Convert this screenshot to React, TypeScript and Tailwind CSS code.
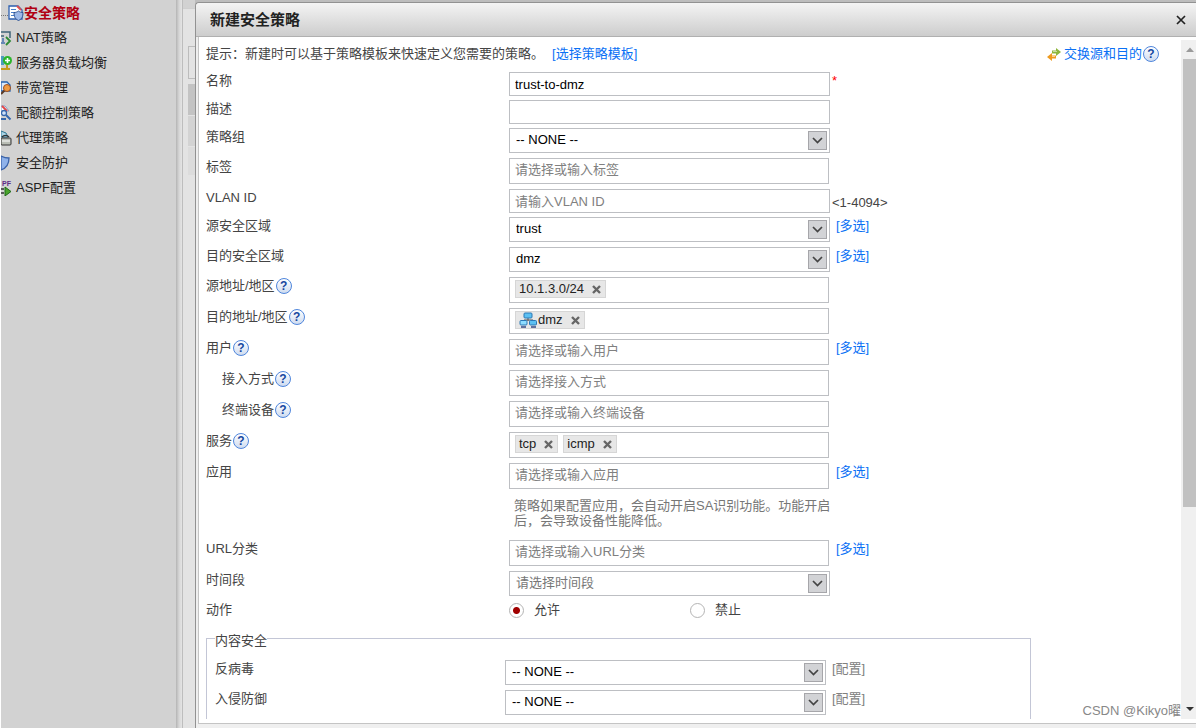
import { useId, useState, type ReactNode } from "react";

const menu = [
  { name: "安全策略", icon: "policy" },
  { name: "NAT策略", icon: "nat" },
  { name: "服务器负载均衡", icon: "balance" },
  { name: "带宽管理", icon: "bandwidth" },
  { name: "配额控制策略", icon: "quota" },
  { name: "代理策略", icon: "proxy" },
  { name: "安全防护", icon: "shield" },
  { name: "ASPF配置", icon: "aspf" },
];

export default function App() {
  return (
    <div className="flex h-screen overflow-hidden bg-[#e6e6e6] font-['Liberation_Sans','Noto_Sans_CJK_SC',sans-serif] text-[13px] leading-[18px] text-[#444]">
      <Sidebar />
      <PageBehind />
      <PolicyDialog />
      <p className="pointer-events-none absolute right-[15px] bottom-2 text-[#888]">
        CSDN @Kikyo曜
      </p>
    </div>
  );
}

function Sidebar() {
  return (
    <nav className="w-[176px] shrink-0 border-l border-white bg-[#d2d2d2]">
      <ul>
        {menu.map((item, i) => (
          <li key={item.name} className="h-[25px]">
            <a
              href="#"
              className={
                i === 0
                  ? "flex h-full items-center text-sm font-bold text-[#b00012]"
                  : "flex h-full items-center gap-1 text-[#222]"
              }
            >
              <MenuIcon name={item.icon} />
              {item.name}
            </a>
          </li>
        ))}
      </ul>
    </nav>
  );
}

/** 对话框后面露出的页面边缘 */
function PageBehind() {
  return (
    <div className="flex w-[19px] shrink-0">
      <div className="w-[7px] shrink-0 border-r border-[#bdbdbd] bg-linear-to-r from-[#b4b4b4] via-[#d6d6d6] to-[#e4e4e4]" />
      <div className="flex flex-1 flex-col bg-[#e3e3e3]">
        <div className="h-[9px] border-b border-[#cfcfcf] bg-[#d2d2d2]" />
        <div className="mt-[37px] ml-[5px] h-[33px] border border-r-0 border-[#bcbcbc]" />
        <div className="mt-[5px] ml-[5px] h-[31px] bg-[#c3c3c3]" />
        <div className="mt-px ml-[5px] h-[30px] bg-[#d3d3d3]" />
        <div className="mt-px ml-[5px] h-[28px] bg-[#dcdcdc]" />
      </div>
    </div>
  );
}

function PolicyDialog() {
  return (
    <div className="flex min-w-0 flex-1 flex-col bg-[#bdbdbd] pt-[2px]">
      <section
        role="dialog"
        aria-labelledby="dialog-title"
        className="flex min-h-0 flex-1 flex-col rounded-tl border-t border-l border-[#929292] bg-[#efefef]"
      >
        <header className="flex h-[34px] shrink-0 items-center justify-between rounded-tl border-b border-[#b0b0b0] bg-linear-to-b from-[#f4f4f4] to-[#cdcdcd] pr-[10px] pl-[14px]">
          <h1 id="dialog-title" className="text-[15px] font-bold text-[#222]">
            新建安全策略
          </h1>
          <button type="button" aria-label="关闭">
            <svg viewBox="0 0 10 10" className="size-[10px]" stroke="#222" strokeWidth="1.7">
              <path d="M1 1l8 8M9 1l-8 8" />
            </svg>
          </button>
        </header>
        <div className="mb-1 ml-[2px] flex min-h-0 flex-1 border-b border-l border-[#c4c4c4] bg-white pb-1">
          <PolicyForm />
          <ScrollBar />
        </div>
      </section>
    </div>
  );
}

function PolicyForm() {
  const [action, setAction] = useState("allow");

  return (
    <form className="min-w-0 flex-1 overflow-hidden pt-2 pl-[7px]">
      <div className="flex h-[27px] items-start justify-between pr-[22px]">
        <div className="flex gap-2">
          <p>提示：新建时可以基于策略模板来快速定义您需要的策略。</p>
          <Link>[选择策略模板]</Link>
        </div>
        <div className="flex items-center">
          <SwapIcon />
          <Link>交换源和目的</Link>
          <Help />
        </div>
      </div>

      <Row label="名称" after={<span className="-ml-1 text-[#f00]">*</span>}>
        {(id) => <TextBox id={id} value="trust-to-dmz" />}
      </Row>
      <Row label="描述">{(id) => <TextBox id={id} />}</Row>
      <Row label="策略组">{(id) => <SelectBox id={id} options={["-- NONE --"]} />}</Row>
      <Row label="标签">{(id) => <TagBox id={id} placeholder="请选择或输入标签" />}</Row>
      <Row label="VLAN ID" after={<span className="-ml-1 self-center">&lt;1-4094&gt;</span>}>
        {(id) => <TextBox id={id} placeholder="请输入VLAN ID" />}
      </Row>
      <Row label="源安全区域" after={<Link>[多选]</Link>}>
        {(id) => <SelectBox id={id} options={["trust", "dmz"]} />}
      </Row>
      <Row label="目的安全区域" after={<Link>[多选]</Link>}>
        {(id) => <SelectBox id={id} options={["dmz", "trust"]} />}
      </Row>
      <Row label="源地址/地区" help>
        {(id) => <TagBox id={id} tags={["10.1.3.0/24"]} />}
      </Row>
      <Row label="目的地址/地区" help>
        {(id) => <TagBox id={id} tags={["dmz"]} icon={<NetworkIcon />} />}
      </Row>
      <Row label="用户" help after={<Link>[多选]</Link>}>
        {(id) => <TagBox id={id} placeholder="请选择或输入用户" />}
      </Row>
      <Row label="接入方式" help indent>
        {(id) => <TagBox id={id} placeholder="请选择接入方式" />}
      </Row>
      <Row label="终端设备" help indent>
        {(id) => <TagBox id={id} placeholder="请选择或输入终端设备" />}
      </Row>
      <Row label="服务" help>
        {(id) => <TagBox id={id} tags={["tcp", "icmp"]} />}
      </Row>
      <Row label="应用" after={<Link>[多选]</Link>}>
        {(id) => <TagBox id={id} placeholder="请选择或输入应用" />}
      </Row>
      <p className="mt-1 ml-[303px] w-[330px] pb-3 pl-[5px] leading-[15px] text-[#777]">
        策略如果配置应用，会自动开启SA识别功能。功能开启后，会导致设备性能降低。
      </p>
      <Row label="URL分类" after={<Link>[多选]</Link>}>
        {(id) => <TagBox id={id} placeholder="请选择或输入URL分类" />}
      </Row>
      <Row label="时间段">
        {(id) => <SelectBox id={id} options={["请选择时间段"]} muted />}
      </Row>

      <div role="radiogroup" aria-labelledby="action-label" className="flex h-[25px] items-start">
        <span id="action-label" className="w-[303px]">
          动作
        </span>
        <Radio label="允许" checked={action === "allow"} onChange={() => setAction("allow")} />
        <Radio label="禁止" checked={action === "deny"} onChange={() => setAction("deny")} />
      </div>

      <fieldset className="w-[825px] border border-[#c3c6d6] px-2 pt-[10px]">
        <legend className="pt-[6px]">内容安全</legend>
        <Row label="反病毒" nested after={<Link disabled>[配置]</Link>}>
          {(id) => <SelectBox id={id} options={["-- NONE --"]} />}
        </Row>
        <Row label="入侵防御" nested after={<Link disabled>[配置]</Link>}>
          {(id) => <SelectBox id={id} options={["-- NONE --"]} />}
        </Row>
        <div className="h-10" />
      </fieldset>
    </form>
  );
}

type RowProps = {
  label: string;
  help?: boolean;
  indent?: boolean;
  nested?: boolean;
  after?: ReactNode;
  children: (id: string) => ReactNode;
};

function Row({ label, help, indent, nested, after, children }: RowProps) {
  const id = useId();
  return (
    <div className="flex items-start">
      <div
        className={`flex shrink-0 items-center ${nested ? "w-[290px]" : "w-[303px]"} ${indent ? "pl-4" : ""}`}
      >
        <label htmlFor={id}>{label}</label>
        {help && <Help />}
      </div>
      <div className="flex items-start gap-[6px]">
        {children(id)}
        {after}
      </div>
    </div>
  );
}

function TextBox({ id, value, placeholder }: { id: string; value?: string; placeholder?: string }) {
  return (
    <input
      id={id}
      type="text"
      defaultValue={value}
      placeholder={placeholder}
      className="mb-1 h-6 w-[321px] border border-[#bdbfc3] bg-white px-[5px] text-black placeholder:text-[#808080]"
    />
  );
}

function SelectBox({ id, options, muted }: { id: string; options: string[]; muted?: boolean }) {
  return (
    <div className="relative mb-[5px] h-[25px] w-[321px]">
      <select
        id={id}
        className={`size-full appearance-none border border-[#bdbfc3] bg-white pb-[2px] pl-[6px] ${muted ? "text-[#777]" : "text-black"}`}
      >
        {options.map((o) => (
          <option key={o}>{o}</option>
        ))}
      </select>
      <span className="pointer-events-none absolute top-[3px] right-[3px] grid size-[19px] place-items-center border border-[#a6a6aa] bg-[#d2d3d6]">
        <svg viewBox="0 0 11 7" className="h-[7px] w-[11px]" fill="none" stroke="#444" strokeWidth="1.7">
          <path d="M1 1l4.5 4.5L10 1" />
        </svg>
      </span>
    </div>
  );
}

type TagBoxProps = { id: string; tags?: string[]; icon?: ReactNode; placeholder?: string };

function TagBox({ id, tags = [], icon, placeholder }: TagBoxProps) {
  const [items, setItems] = useState(tags);
  return (
    <div className="mr-px mb-[5px] flex h-[26px] w-[320px] items-start gap-[5px] border border-[#bdbfc3] bg-white px-[5px] pt-[2px]">
      {items.map((tag) => (
        <span
          key={tag}
          className="flex h-[18px] items-center border border-[#d6d6d6] bg-[#e7e7e7] px-[3px] leading-4 text-[#222]"
        >
          {icon}
          {tag}
          <button
            type="button"
            aria-label={`删除 ${tag}`}
            onClick={() => setItems(items.filter((t) => t !== tag))}
            className="ml-[7px] p-px"
          >
            <svg viewBox="0 0 9 9" className="size-[9px]" stroke="#666" strokeWidth="2.4">
              <path d="M1 1l7 7M8 1l-7 7" />
            </svg>
          </button>
        </span>
      ))}
      <input
        id={id}
        type="text"
        placeholder={placeholder}
        className="h-[18px] min-w-0 flex-1 outline-none placeholder:text-[#808080]"
      />
    </div>
  );
}

function Radio({ label, checked, onChange }: { label: string; checked: boolean; onChange: () => void }) {
  return (
    <label className="flex w-[181px] items-center gap-[10px]">
      <input
        type="radio"
        name="action"
        checked={checked}
        onChange={onChange}
        className="size-[15px] appearance-none rounded-full border border-[#b4b4b4] bg-white checked:bg-[radial-gradient(circle,#a00000_3px,#fff_4px)]"
      />
      {label}
    </label>
  );
}

function Link({ children, disabled }: { children: ReactNode; disabled?: boolean }) {
  return (
    <a href="#" className={disabled ? "text-[#808080]" : "text-[#0a70f5]"}>
      {children}
    </a>
  );
}

function Help() {
  return (
    <button
      type="button"
      aria-label="帮助"
      className="ml-px grid size-4 place-items-center rounded-full border border-[#4f86dc] bg-linear-to-b from-white to-[#cfdcf0] text-xs leading-none font-bold text-[#1747a0]"
    >
      ?
    </button>
  );
}

function ScrollBar() {
  return (
    <div aria-hidden="true" className="mt-[3px] flex w-[15px] shrink-0 flex-col bg-[#f0f0f0] pl-[2px]">
      <svg viewBox="0 0 13 19" className="h-[19px] w-[13px] shrink-0" fill="#9a9a9a">
        <path d="M3 12l4-4.500 4 4.500z" />
      </svg>
      <div className="h-[66%] bg-[#c1c1c1]" />
      <svg viewBox="0 0 13 19" className="mt-auto h-[19px] w-[13px] shrink-0" fill="#333">
        <path d="M3 7h8l-4 4z" />
      </svg>
    </div>
  );
}

function SwapIcon() {
  return (
    <svg viewBox="0 0 16 14" className="mr-[2px] h-[14px] w-4">
      <path d="M6 3.500h4V1l5 4-5 4V6.500H6z" fill="#8db63c" />
      <path d="M10 8.500H6V6L1 10l5 4v-2.500h4z" fill="#ee9a1e" />
      <path d="M7 4.500h4M6 9.500h3" stroke="#fff" strokeOpacity=".5" />
    </svg>
  );
}

function NetworkIcon() {
  return (
    <svg viewBox="0 0 18 16" className="mr-px h-4 w-[18px]">
      <path d="M9 6v3M5 10V8h9v2" stroke="#555" fill="none" />
      <rect x="5" y="1" width="8" height="5" rx="1" fill="#5cc0f2" stroke="#2b78b5" />
      <rect x="1" y="8.500" width="7" height="4.500" rx="1" fill="#8ddcff" stroke="#2b78b5" />
      <rect x="10.500" y="8.500" width="7" height="4.500" rx="1" fill="#5cc0f2" stroke="#2b78b5" />
      <path d="M2 15h5M12 15h5" stroke="#364b86" strokeWidth="1.500" />
    </svg>
  );
}

/** 树形菜单图标，除第一项外左半部分被窗口边缘裁掉 */
function MenuIcon({ name }: { name: string }) {
  if (name === "policy") {
    return (
      <svg viewBox="0 0 23 16" className="h-4 w-[23px]">
        <path d="M0 10.500h7" stroke="#777" strokeDasharray="1 1" />
        <path d="M8 1h9l4 4v9H8z" fill="#fff" stroke="#2c5fb0" strokeWidth="1.300" />
        <path d="M16 1l4 4" stroke="#e05050" strokeWidth="2" />
        <path d="M10 4.500h5M10 7.500h4M10 10.500h4" stroke="#4b80cc" />
        <path d="M13 7.500c2 0 3-.5 4.500-1.500 1 1 3 1.500 4.500 1.500 0 4-1 6.500-4.500 8-3.500-1.500-4.500-4-4.500-8z" fill="#9db9e8" stroke="#2c5190" />
      </svg>
    );
  }
  return (
    <svg viewBox="0 0 11 16" className="h-4 w-[11px]">
      {name === "nat" && (
        <>
          <path d="M0 2h9v6M0 6h3" fill="none" stroke="#3f6478" strokeWidth="1.500" />
          <path d="M5 7l4 4-4 4" fill="none" stroke="#2e8a35" strokeWidth="1.800" />
          <path d="M2 8v4M0 13h4" stroke="#4470b0" strokeWidth="1.500" />
        </>
      )}
      {name === "balance" && (
        <>
          <path d="M0 1h3v9H0z" fill="#4d9cc0" />
          <circle cx="6.500" cy="5.500" r="4.500" fill="#2bb52b" />
          <path d="M6.500 3v5M4 5.500h5" stroke="#fff" strokeWidth="1.600" />
          <path d="M0 14h9M6 10v4" stroke="#c79b1d" strokeWidth="2" />
        </>
      )}
      {name === "bandwidth" && (
        <>
          <path d="M0 2h6l3 3v6H0z" fill="#d9e9fb" stroke="#2763ad" strokeWidth="1.300" />
          <path d="M0 14l5-5" stroke="#5a3a26" strokeWidth="2" />
          <circle cx="6" cy="8" r="3.500" fill="#ef9b42" stroke="#9c4f22" />
        </>
      )}
      {name === "quota" && (
        <>
          <path d="M0 1h4l4 5H0z" fill="#fff" stroke="#7f9ac4" />
          <path d="M1 1l5 5" stroke="#e34949" strokeWidth="2" />
          <circle cx="3" cy="8" r="2.500" fill="#cfe2fa" stroke="#3567ad" strokeWidth="1.300" />
          <path d="M5 10l4.500 4.500M0 14h5" stroke="#3567ad" strokeWidth="2" />
        </>
      )}
      {name === "proxy" && (
        <>
          <path d="M0 1l5 2 2 4H0z" fill="#a9d4e4" stroke="#2f7590" />
          <path d="M1 7c2-2 5-2 7 0" fill="none" stroke="#333" strokeWidth="1.500" />
          <rect x="0" y="8" width="10" height="7" rx="1" fill="#b9bdb5" stroke="#333" />
          <path d="M1 11h8" stroke="#fff" />
        </>
      )}
      {name === "shield" && (
        <path d="M0 1c2 1 5 2 8 2 0 6-2 10-8 12z" fill="#8fb2ea" stroke="#3a62a8" strokeWidth="1.300" />
      )}
      {name === "aspf" && (
        <>
          <text x="1" y="6" fontSize="7" fontWeight="bold" fill="#5d2b86">
            PF
          </text>
          <path d="M4 7l6 4.500L4 16z" fill="#4aa52c" stroke="#1e6a18" />
          <path d="M0 9h3M0 13h3" stroke="#333" strokeWidth="1.500" />
        </>
      )}
    </svg>
  );
}
